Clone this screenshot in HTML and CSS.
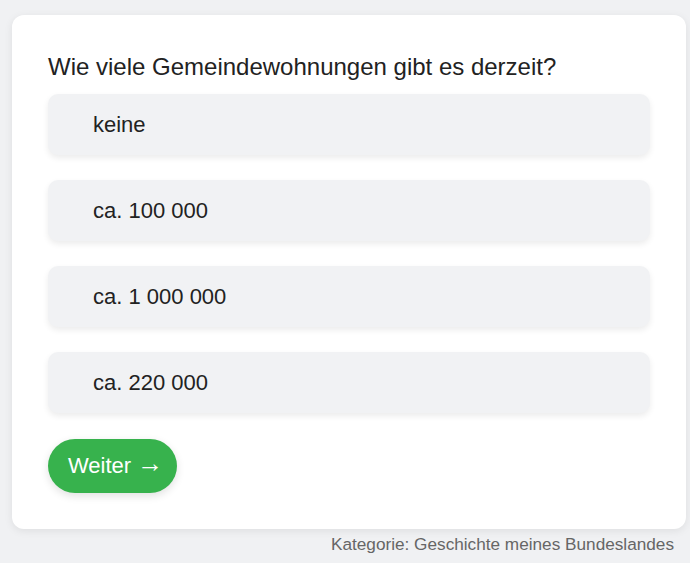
FILE: index.html
```html
<!DOCTYPE html>
<html lang="de">
<head>
<meta charset="utf-8">
<link rel="stylesheet" href="styles.css">
</head>
<body>
<div class="wrap">
  <div class="card">
    <h2 class="question">Wie viele Gemeindewohnungen gibt es derzeit?</h2>
    <div class="options">
      <div class="option">keine</div>
      <div class="option">ca. 100 000</div>
      <div class="option">ca. 1 000 000</div>
      <div class="option">ca. 220 000</div>
    </div>
    <button class="next">Weiter <span class="arrow">→</span></button>
  </div>
  <div class="category">Kategorie: Geschichte meines Bundeslandes</div>
</div>
</body>
</html>
```

FILE: styles.css
```css
html, body {
  margin: 0;
  padding: 0;
  background: #f0f1f3;
  font-family: "Liberation Sans", Arial, sans-serif;
}
.wrap {
  padding: 15px 4px 0 12px;
}
.card {
  background: #fff;
  border-radius: 12px;
  box-shadow: 0 2px 8px rgba(0,0,0,0.08);
  padding: 35px 36px 36px 36px;
}
.question {
  margin: 0 0 10px 0;
  font-size: 24px;
  font-weight: normal;
  color: #222;
  line-height: 34px;
}
.options {
  display: flex;
  flex-direction: column;
  gap: 25px;
}
.option {
  background: #f1f2f4;
  border-radius: 10px;
  height: 61px;
  display: flex;
  align-items: center;
  padding-left: 45px;
  font-size: 22px;
  color: #222;
  box-shadow: 0 3px 6px rgba(0,0,0,0.08);
}
.next {
  margin-top: 26px;
  background: #37b24d;
  color: #fff;
  border: none;
  border-radius: 27px;
  height: 54px;
  padding: 0 14px 0 20px;
  font-family: inherit;
  font-size: 22px;
  box-shadow: 0 3px 8px rgba(0,0,0,0.12);
}
.arrow {
  display: inline-block;
  font-size: 26px;
  line-height: 0;
  vertical-align: 1px;
}
.category {
  text-align: right;
  padding: 5px 12px 0 0;
  font-size: 17.2px;
  color: #666;
}
```
